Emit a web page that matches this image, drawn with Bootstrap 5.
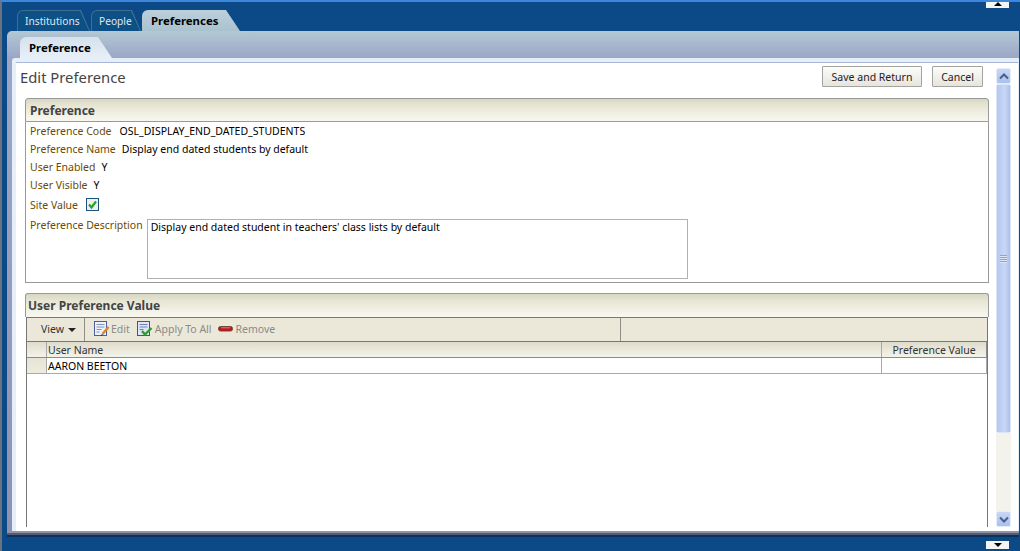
<!doctype html>
<html lang="en"><head><meta charset="utf-8"><title>Edit Preference</title>
<link href="https://cdn.jsdelivr.net/npm/bootstrap@5.3.0/dist/css/bootstrap.min.css" rel="stylesheet">
<style>
html,body{margin:0;height:551px;overflow:hidden;background:#0b4a87}
body{font:10.5px/14px "Noto Sans",Tahoma,sans-serif;color:#000}
.shell{position:relative;height:551px;border-top:2px solid #3d86dc;border-left:2px solid #6b7280;background:#0b4a87;overflow:hidden}
.edgebtn{position:absolute;right:11px;width:23px;height:8px;background:#f4f4f2;display:flex;align-items:center;justify-content:center}
.edgebtn.up{top:-2px}.edgebtn.down{bottom:2px}
.arrow-up{width:0;height:0;border:4px solid transparent;border-top:0;border-bottom:4px solid #000}
.arrow-down{width:0;height:0;border:4px solid transparent;border-bottom:0;border-top:4px solid #000}
.toptabs{height:29px;padding:8px 0 0 15px;gap:1px}
.ttab{position:relative;height:21px;padding:1px 0 0 8px;background:#3f7090;color:#dfe9f2;border-radius:6px 0 0 0;clip-path:polygon(0 0,calc(100% - 9px) 0,100% 100%,0 100%);line-height:20px;font-size:10.2px;isolation:isolate}
.ttab::before{content:"";position:absolute;z-index:-1;inset:1px 1px 0 1px;background:#0c5086;border-radius:5px 0 0 0;clip-path:polygon(0 0,calc(100% - 9px) 0,100% 100%,0 100%)}
.ttab.t1{width:73px}.ttab.t2{width:50px}
.ttab.active{width:98px;height:21px;padding:0 0 0 9px;background:linear-gradient(#bcd0db,#aac2cf);color:#000;font-weight:700;font-size:11.4px;line-height:21px;clip-path:polygon(0 0,calc(100% - 14px) 0,100% 100%,0 100%)}
.ttab.active::before{display:none}
.panel{margin:0 1px 0 5px;height:504px;background:linear-gradient(#b3c8d4,#9ba6c6 27px,#9ba6c6 40px,#8d93ad 100%);border-radius:5px 0 0 0;border-bottom:2px solid #555c70;box-shadow:0 2px 0 #08335f;padding-top:6px}
.subtabs{height:21px;padding-left:13px}
.subtab{width:92px;height:21px;padding-left:9px;line-height:21px;font-weight:700;font-size:11.4px;background:linear-gradient(#d5e1eb,#e8eff8);clip-path:polygon(0 0,calc(100% - 14px) 0,100% 100%,0 100%);border-radius:6px 0 0 0}
.inner{margin:0 0 0 5px;height:473px;background:#e6eef8;padding:4px 1px 0 4px;border-radius:3px 0 0 0}
.work{height:469px;background:#fff;border-top:1px solid #a9b6d6}
.content{width:980px;padding:0 7px 0 4px;overflow:hidden;height:464px}
.head{height:35px;padding-top:3px}
.title{font-size:14.8px;line-height:20px;color:#444;padding-top:1px}
.ubtn{height:21px;padding:1px 0 0;line-height:18px;font-size:10.5px;color:#222;background:linear-gradient(#fcfcfa,#e6e4dc);border:1px solid #a3a3a0;border-radius:1px}
.ubtn.b1{width:100px;margin-right:10px}.ubtn.b2{width:51px;margin-right:6px}
.section{width:964px;margin-left:5px}
.sechead{height:24px;padding-left:4px;line-height:23px;font-size:12px;font-weight:700;color:#444;background:linear-gradient(#d8d7c2,#e7e6d4 30%,#f8f8f1);border:1px solid #999;border-radius:3px 3px 0 0}
.secbody{height:161px;border:1px solid #999;border-top:0;padding:0 4px}
.frow{height:18px;line-height:18px;gap:8px}
.frow.tight{gap:6px}
.flabel{color:#6b4a00}
.frow.site{height:21px;align-items:center}
.chk{width:13px;height:13px;border:1px solid #1c5180;background:#eef0ee;display:flex}
.desc{gap:4px;margin-top:3px}
.descbox{width:541px;height:60px;border:1px solid #b1b1b1;padding:0 3px;line-height:14px;margin-top:1px}
.sec2{margin-top:10px}
.sec2 .sechead{border-bottom:0;padding-left:2px;height:24px}
.tbl{margin-left:1px;width:962px;border:1px solid #777;border-bottom:0;height:210px;background:#fff}
.tools{height:24px;background:#ebe8d9;border-bottom:1px solid #777;color:#8a8a88}
.viewcell{width:58px;height:23px;padding:0 0 2px 6px;border-right:1px solid #8e8e84;color:#333;justify-content:center;gap:4px}
.toolgap{width:536px;height:23px;border-right:1px solid #8e8e84;padding:0 0 2px 8px;gap:2px}
.tool{gap:1px;margin-right:4px}
.tool.wide{gap:2px}
.caret{width:0;height:0;border:4px solid transparent;border-bottom:0;border-top:4px solid #222;margin-top:2px}
.hrow{height:16px;background:linear-gradient(#dedccb,#f4f3ea);border-bottom:1px solid #8b8b8b;width:960px;border-right:1px solid #8b8b8b;color:#333;line-height:17px}
.brow{height:16px;border-bottom:1px solid #a9a9a9;width:960px;border-right:1px solid #a9a9a9;line-height:17px;background:#fff}
.c0{width:20px;border-right:1px solid #a9a9a9;height:100%}
.brow .c0{background:linear-gradient(#e6e4d5,#eeecdf)}
.c1{width:835px;padding-left:1px;height:100%}
.c2{width:105px;border-left:1px solid #a9a9a9;text-align:center;height:100%}
.sbar{width:15px;height:459px;margin-top:5px}
.sb{height:16px;background:linear-gradient(#c8d7f6,#a9c0ee);border:1px solid #e5edfb;border-radius:2px;display:flex;align-items:center;justify-content:center;flex:none}
.thumb{height:349px;flex:none;background:linear-gradient(90deg,#b4c8f0,#c9d7f6 60%,#aac0ea);border:1px solid #dbe5f8;border-radius:2px;display:flex;align-items:center;justify-content:center}
.track{flex:1;background:#f3f3ec}
.grip{width:7px;height:8px;background:repeating-linear-gradient(#8ea6d6 0 1px,#dbe5f8 1px 2px)}
.rmv{margin-right:2px}
</style></head>
<body>
<div class="shell">
  <div class="edgebtn up"><span class="arrow-up"></span></div>
  <div class="d-flex toptabs">
    <div class="ttab t1">Institutions</div><div class="ttab t2">People</div><div class="ttab active">Preferences</div>
  </div>
  <div class="panel">
    <div class="subtabs"><div class="subtab">Preference</div></div>
    <div class="inner">
      <div class="work d-flex">
        <div class="content">
          <div class="head d-flex justify-content-between">
            <div class="title">Edit Preference</div>
            <div class="d-flex">
              <button class="btn ubtn b1">Save and Return</button><button class="btn ubtn b2">Cancel</button>
            </div>
          </div>
          <div class="section">
            <div class="sechead">Preference</div>
            <div class="secbody">
              <div class="d-flex frow"><span class="flabel">Preference Code</span><span>OSL_DISPLAY_END_DATED_STUDENTS</span></div>
              <div class="d-flex frow tight"><span class="flabel">Preference Name</span><span>Display end dated students by default</span></div>
              <div class="d-flex frow tight"><span class="flabel">User Enabled</span><span>Y</span></div>
              <div class="d-flex frow tight"><span class="flabel">User Visible</span><span>Y</span></div>
              <div class="d-flex frow site"><span class="flabel">Site Value</span><span class="chk"><svg width="11" height="11" viewBox="0 0 11 11"><path d="M2 5.5 4.5 8.5 9 2.5" fill="none" stroke="#2aa02a" stroke-width="2.2"/></svg></span></div>
              <div class="d-flex desc"><span class="flabel">Preference Description</span><div class="descbox">Display end dated student in teachers' class lists by default</div></div>
            </div>
          </div>
          <div class="section sec2">
            <div class="sechead">User Preference Value</div>
            <div class="tbl">
              <div class="d-flex tools">
                <div class="d-flex align-items-center viewcell">View <span class="caret"></span></div>
                <div class="d-flex align-items-center toolgap">
                  <span class="d-flex align-items-center tool"><svg width="17" height="17" viewBox="0 0 17 17"><rect x="1.5" y="1.5" width="12" height="14" fill="#eef1fa" stroke="#4a609c"/><path d="M3.5 4.5h8M3.5 7h8M3.5 9.5h5M3.5 12h3" stroke="#7f90bb"/><path d="M15.5 7 9.5 14" stroke="#d8862a" stroke-width="2.4"/><path d="M9.5 14l-1.5 2" stroke="#333"/></svg>Edit</span>
                  <span class="d-flex align-items-center tool wide"><svg width="17" height="17" viewBox="0 0 17 17"><rect x="1.5" y="1.5" width="12" height="14" fill="#dfe5f6" stroke="#3d5596"/><path d="M3.5 4.5h8M3.5 7h8M3.5 9.5h4" stroke="#6f82b2"/><path d="M6 11 9 14.5 15.5 8" fill="none" stroke="#2aa02a" stroke-width="2.4"/></svg>Apply To All</span>
                  <span class="d-flex align-items-center tool"><svg class="rmv" width="15" height="8" viewBox="0 0 15 8"><rect x=".5" y="1.5" width="14" height="4.5" rx="2" fill="#c8101a" stroke="#6a4a3a"/><path d="M3 2.8h9" stroke="#ee7a7a"/></svg>Remove</span>
                </div>
              </div>
              <div class="d-flex hrow"><div class="c0"></div><div class="c1">User Name</div><div class="c2">Preference Value</div></div>
              <div class="d-flex brow"><div class="c0"></div><div class="c1">AARON BEETON</div><div class="c2"></div></div>
            </div>
          </div>
        </div>
        <div class="sbar d-flex flex-column">
          <div class="sb"><svg width="10" height="7" viewBox="0 0 10 7"><path d="M1 5.5 5 1.5 9 5.5" fill="none" stroke="#4a5f8c" stroke-width="2"/></svg></div>
          <div class="thumb"><span class="grip"></span></div>
          <div class="track"></div>
          <div class="sb"><svg width="10" height="7" viewBox="0 0 10 7"><path d="M1 1.5 5 5.5 9 1.5" fill="none" stroke="#4a5f8c" stroke-width="2"/></svg></div>
        </div>
      </div>
    </div>
  </div>
  <div class="edgebtn down"><span class="arrow-down"></span></div>
</div>
</body></html>
